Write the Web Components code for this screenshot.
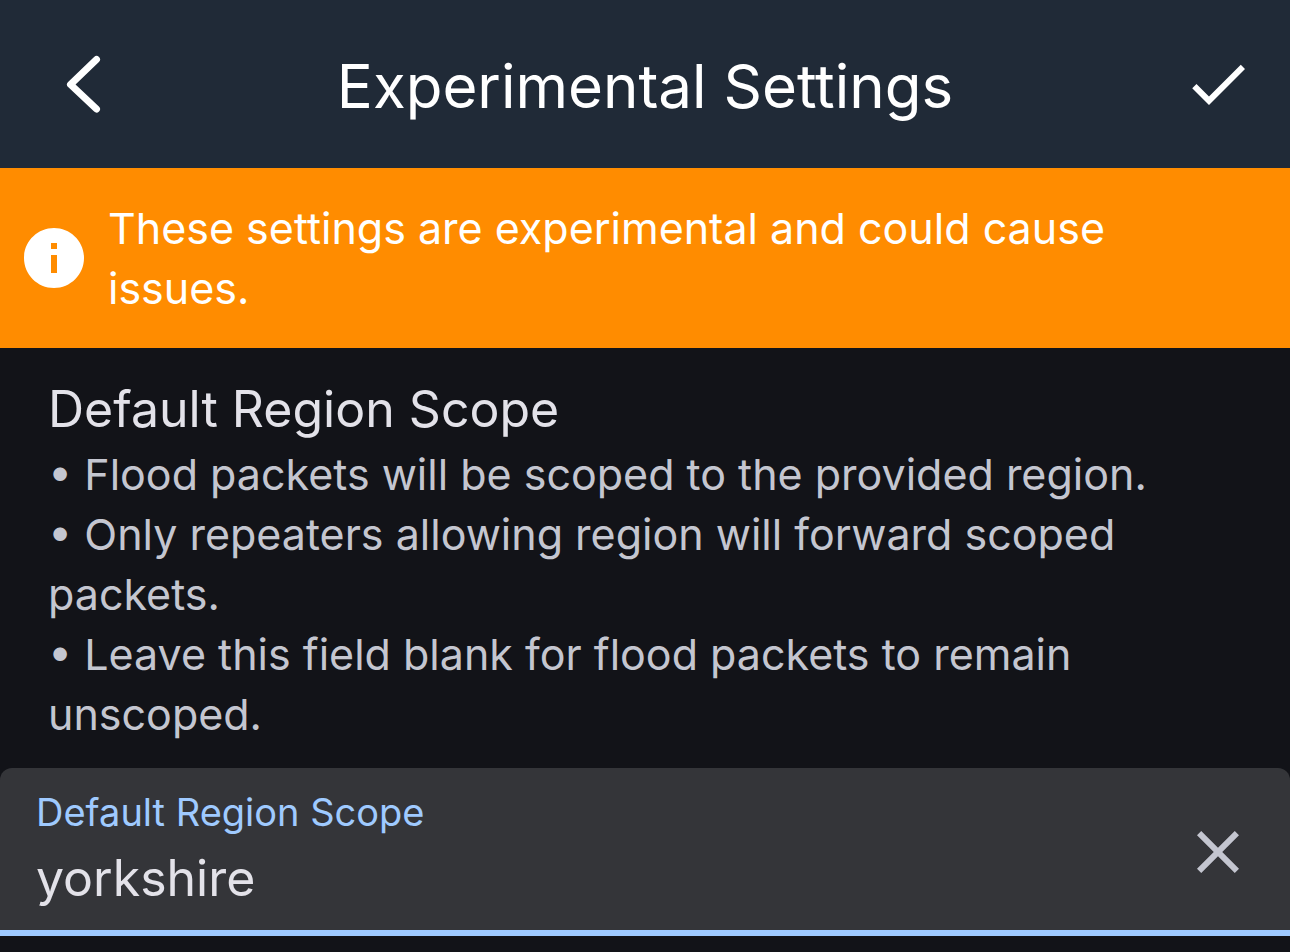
<!DOCTYPE html>
<html lang="en">
<head>
<meta charset="utf-8">
<meta name="viewport" content="width=device-width, initial-scale=1">
<title>Experimental Settings</title>
<style>
  html { background: #121318; }
  body {
    margin: 0;
    background: #121318;
    color: #e3e2e9;
    font-family: Inter, "Noto Sans", sans-serif;
    font-weight: 400;
  }
</style>
</head>
<body>
<settings-page>
  <app-header slot="header">Experimental Settings</app-header>
  <warning-banner slot="banner">These settings are experimental and could cause issues.</warning-banner>
  <setting-section>
    <span slot="title">Default Region Scope</span>
    <setting-note>• Flood packets will be scoped to the provided region.</setting-note>
    <setting-note>• Only repeaters allowing region will forward scoped packets.</setting-note>
    <setting-note>• Leave this field blank for flood packets to remain unscoped.</setting-note>
  </setting-section>
  <text-field label="Default Region Scope" value="yorkshire"></text-field>
</settings-page>

<script>
  const define = (name, html, setup) => {
    const template = document.createElement('template');
    template.innerHTML = html;
    customElements.define(name, class extends HTMLElement {
      constructor() {
        super();
        this.attachShadow({ mode: 'open' }).append(template.content.cloneNode(true));
      }
      connectedCallback() {
        if (setup) setup(this, this.shadowRoot);
      }
    });
  };

  define('settings-page', `
    <style>
      :host { display: flex; flex-direction: column; }
      main { display: flex; flex-direction: column; }
    </style>
    <slot name="header"></slot>
    <slot name="banner"></slot>
    <main><slot></slot></main>
  `);

  define('app-header', `
    <style>
      :host { display: block; background: #202a37; color: #fff; }
      header {
        display: grid;
        grid-template-columns: 96px 1fr 96px;
        align-items: center;
        padding: 36px;
      }
      h1 {
        margin: 0;
        padding-top: 4px;
        font-size: 60px;
        line-height: 92px;
        font-weight: 400;
        text-align: center;
      }
      button {
        display: flex;
        align-items: center;
        justify-content: center;
        padding: 0;
        border: 0;
        background: none;
        color: inherit;
        height: 96px;
      }
      .confirm { justify-content: flex-end; }
      svg { width: 72px; height: 72px; display: block; }
    </style>
    <header>
      <button class="back" type="button" aria-label="Back">
        <svg viewBox="0 0 72 72" fill="none" stroke="currentColor" stroke-width="7" stroke-linecap="round" stroke-linejoin="round"><path d="M48.500 11.500L22.500 36.500L48.500 61"/></svg>
      </button>
      <h1><slot></slot></h1>
      <button class="confirm" type="button" aria-label="Save">
        <svg viewBox="0 0 24 24" fill="currentColor"><path d="M9 16.170L4.830 12l-1.420 1.410L9 19 21 7l-1.410-1.410z"/></svg>
      </button>
    </header>
  `);

  define('warning-banner', `
    <style>
      :host {
        display: flex;
        align-items: center;
        gap: 18px;
        padding: 30px 72px 30px 18px;
        background: #ff8c00;
        color: #fff;
      }
      svg { width: 72px; height: 72px; flex: none; }
      p { margin: 0; flex: 1; font-size: 43px; line-height: 60px; }
    </style>
    <svg viewBox="0 0 24 24" fill="currentColor" aria-hidden="true"><path d="M12 2C6.480 2 2 6.480 2 12s4.480 10 10 10 10-4.480 10-10S17.520 2 12 2zm1 15h-2v-6h2v6zm0-8h-2V7h2v2z"/></svg>
    <p><slot></slot></p>
  `);

  define('setting-section', `
    <style>
      :host { display: block; padding: 26px 48px 24px; }
      h2 { margin: 0; font-size: 50px; line-height: 70px; font-weight: inherit; }
      .notes { color: #c4c6d0; font-size: 43px; line-height: 60px; }
    </style>
    <h2><slot name="title"></slot></h2>
    <div class="notes"><slot></slot></div>
  `);

  define('setting-note', `
    <style>
      :host { display: block; }
      p { margin: 0; }
    </style>
    <p><slot></slot></p>
  `);

  define('text-field', `
    <style>
      :host {
        display: flex;
        align-items: center;
        padding: 0 36px;
        border-bottom: 6px solid #9fcaff;
        border-radius: 12px 12px 0 0;
        background: #343539;
      }
      .entry {
        flex: 1;
        min-width: 0;
        display: flex;
        flex-direction: column;
        padding: 14px 0 16px;
      }
      label { color: #9fcaff; font-size: 38px; line-height: 60px; }
      input {
        width: 100%;
        height: 72px;
        margin: 0;
        padding: 0;
        border: 0;
        outline: 0;
        background: none;
        color: #e3e2e9;
        font: inherit;
        font-size: 50px;
        line-height: 72px;
      }
      button {
        display: flex;
        padding: 6px 0 0;
        border: 0;
        background: none;
        color: #c4c6d0;
      }
      svg { width: 72px; height: 72px; display: block; }
    </style>
    <div class="entry">
      <label for="field"></label>
      <input id="field" type="text" autocomplete="off" spellcheck="false">
    </div>
    <button type="button" aria-label="Clear">
      <svg viewBox="0 0 24 24" fill="currentColor"><path d="M19 6.410L17.590 5 12 10.590 6.410 5 5 6.410 10.590 12 5 17.590 6.410 19 12 13.410 17.590 19 19 17.590 13.410 12z"/></svg>
    </button>
  `, (host, root) => {
    const input = root.querySelector('input');
    root.querySelector('label').textContent = host.getAttribute('label');
    input.value = host.getAttribute('value') || '';
    root.querySelector('button').addEventListener('click', () => {
      input.value = '';
      input.focus();
    });
  });
</script>
</body>
</html>
